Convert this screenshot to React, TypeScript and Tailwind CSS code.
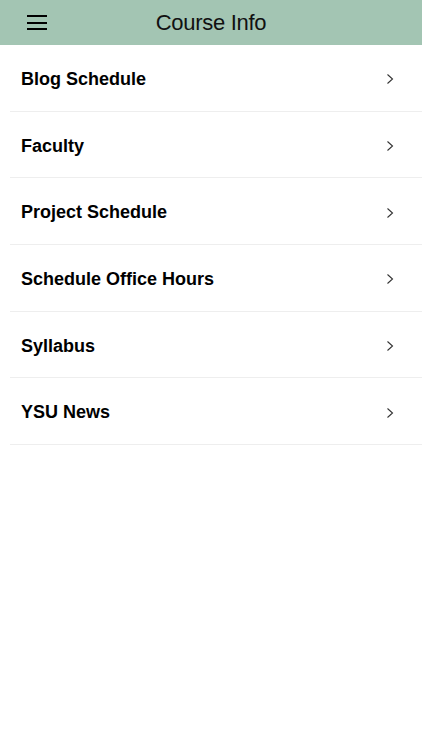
const ITEMS = [
  "Blog Schedule",
  "Faculty",
  "Project Schedule",
  "Schedule Office Hours",
  "Syllabus",
  "YSU News",
];

const Chevron = () => (
  <svg width="8" height="12" viewBox="0 0 8 12" fill="none">
    <path d="M1.5 1.5 L6.5 6 L1.5 10.5" stroke="#333" strokeWidth="1.1" />
  </svg>
);

const App = () => {
  return (
    <main
      className="w-[422px] h-[750px] bg-white"
      style={{ fontFamily: '"Liberation Sans", Arial, sans-serif' }}
    >
      <header className="relative h-[45px] bg-[#a3c5b3] flex items-center justify-center">
        <button className="absolute left-[27px] top-[15px] flex flex-col gap-[4.5px]">
          <span className="block w-[20px] h-[2px] bg-black" />
          <span className="block w-[20px] h-[2px] bg-black" />
          <span className="block w-[20px] h-[2px] bg-black" />
        </button>
        <h1 className="text-[22px] font-light text-[#111] tracking-[-0.3px]">Course Info</h1>
      </header>
      <ul className="pl-[10px]">
        {ITEMS.map((item) => (
          <li
            key={item}
            className="h-[66.7px] flex items-center justify-between border-b border-[#eeeeee] pl-[11px] pr-[28px] pt-[3px]"
          >
            <span className="text-[18px] font-bold text-black">{item}</span>
            <Chevron />
          </li>
        ))}
      </ul>
    </main>
  );
};

export default App;
